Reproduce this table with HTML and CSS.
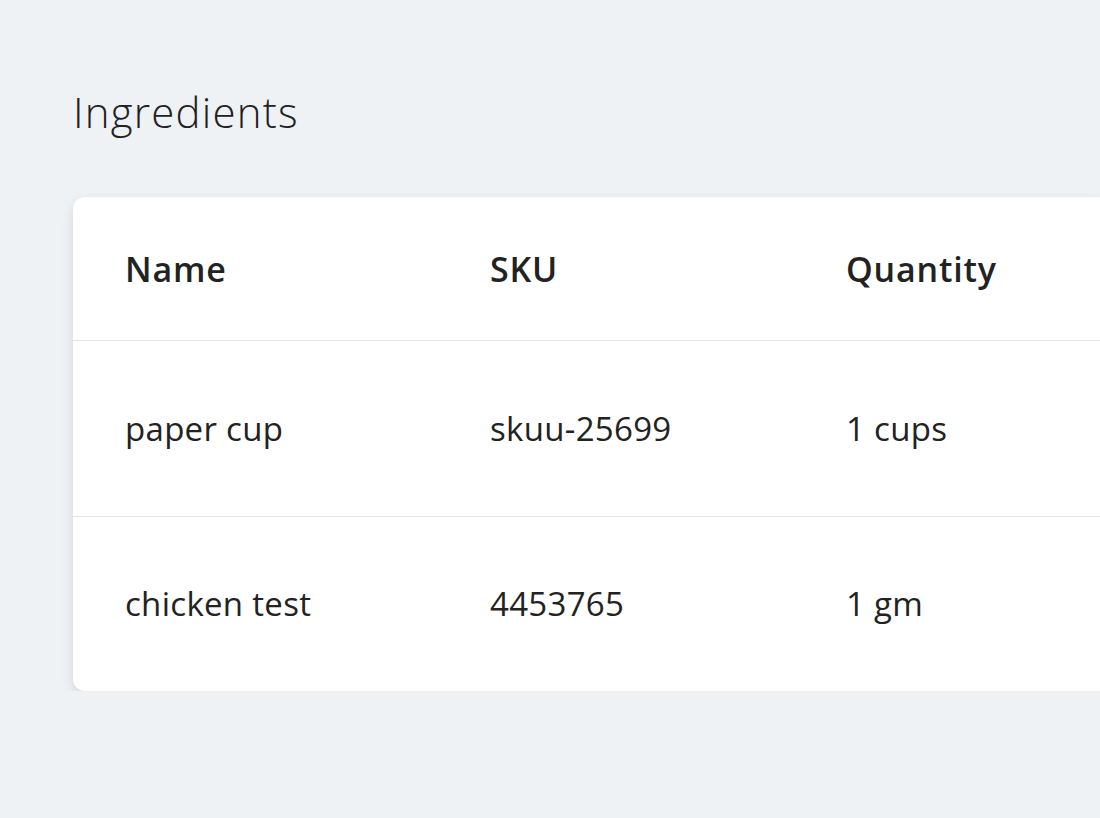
FILE: index.html
```html
<!DOCTYPE html>
<html>
<head>
<meta charset="utf-8">
<link rel="stylesheet" href="styles.css">
</head>
<body>
<main class="page">
  <h1 class="title">Ingredients</h1>
  <section class="card">
    <div class="row head">
      <div class="cell">Name</div>
      <div class="cell">SKU</div>
      <div class="cell">Quantity</div>
    </div>
    <div class="row">
      <div class="cell">paper cup</div>
      <div class="cell">skuu-25699</div>
      <div class="cell">1 cups</div>
    </div>
    <div class="row last">
      <div class="cell">chicken test</div>
      <div class="cell">4453765</div>
      <div class="cell">1 gm</div>
    </div>
  </section>
</main>
</body>
</html>
```
FILE: styles.css
```css
html, body {
  margin: 0;
  padding: 0;
  background: #eff2f5;
}
body {
  font-family: "Open Sans", "Noto Sans", sans-serif;
  color: #222222;
}
.page {
  padding: 84px 0 0 73px;
}
.title {
  margin: 0;
  font-size: 42px;
  font-weight: 300;
  letter-spacing: 1.2px;
  line-height: 56px;
  color: #222222;
}
.card {
  margin-top: 57px;
  background: #ffffff;
  border-radius: 12px 0 0 12px;
  box-shadow: 0 5px 12px rgba(20, 30, 50, 0.13);
}
.row {
  display: grid;
  grid-template-columns: 365px 356px 1fr;
  align-items: center;
  height: 175px;
  border-bottom: 1px solid #e6e7eb;
  padding-left: 52px;
}
.row.head {
  height: 143px;
}
.row.last {
  border-bottom: none;
  height: 174px;
}
.cell {
  font-size: 33px;
  font-weight: 400;
  letter-spacing: 0.3px;
  line-height: 40px;
  color: #222222;
}
.head .cell {
  font-size: 34px;
  font-weight: 600;
  letter-spacing: 0.8px;
}
```
